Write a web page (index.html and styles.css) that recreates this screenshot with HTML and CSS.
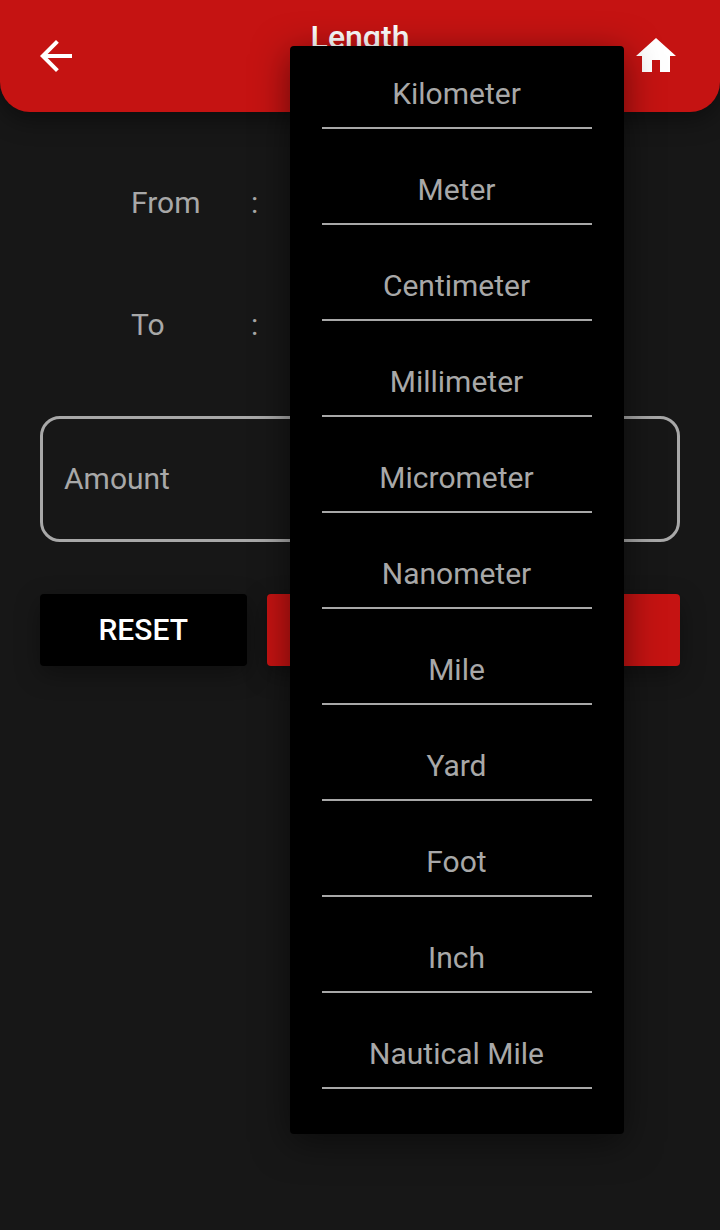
FILE: index.html
```html
<!DOCTYPE html>
<html lang="en">
<head>
<meta charset="utf-8">
<title>Length</title>
<link rel="stylesheet" href="styles.css">
</head>
<body>
<div class="screen">
  <header class="app-bar">
    <svg class="icon" viewBox="0 0 24 24"><path d="M20 11H7.830l5.590-5.590L12 4l-8 8 8 8 1.410-1.410L7.830 13H20v-2z"/></svg>
    <h1 class="title">Length</h1>
    <svg class="icon" viewBox="0 0 24 24"><path d="M10 20v-6h4v6h5v-8h3L12 3 2 12h3v8z"/></svg>
  </header>
  <main class="content">
    <div class="row"><span class="label">From</span><span>:</span></div>
    <div class="row"><span class="label">To</span><span>:</span></div>
    <div class="amount">Amount</div>
    <div class="actions">
      <button class="btn reset">RESET</button>
      <button class="btn convert" aria-label="Convert"></button>
    </div>
  </main>
  <ul class="menu">
    <li class="item">Kilometer</li>
    <li class="item">Meter</li>
    <li class="item">Centimeter</li>
    <li class="item">Millimeter</li>
    <li class="item">Micrometer</li>
    <li class="item">Nanometer</li>
    <li class="item">Mile</li>
    <li class="item">Yard</li>
    <li class="item">Foot</li>
    <li class="item">Inch</li>
    <li class="item">Nautical Mile</li>
  </ul>
</div>
</body>
</html>
```
FILE: styles.css
```css
* { box-sizing: border-box; }
body { margin: 0; background: #171717; font-family: Roboto, sans-serif; }
.screen { position: relative; height: 1230px; overflow: hidden; color: #a8a8a8; font-size: 30px; line-height: 36px; }
.app-bar {
  display: grid; grid-template-columns: 48px 1fr 48px; align-items: start;
  height: 112px; padding: 32px 40px 32px 32px; background: #c51312;
  border-radius: 0 0 30px 30px; box-shadow: 0 8px 24px rgba(0, 0, 0, .4);
}
.icon { width: 48px; height: 48px; fill: #fff; }
.title { margin: -14px 0 0 8px; font-size: 32px; line-height: 38px; font-weight: 500; text-align: center; color: #fff; }
.content { padding: 73px 40px 0; }
.row { display: flex; height: 122px; padding-left: 91px; }
.label { width: 120px; }
.amount {
  display: flex; align-items: center; height: 126px; margin-top: -13px;
  padding-left: 21px; border: 3px solid #a8a8a8; border-radius: 20px;
}
.actions { display: flex; gap: 20px; margin-top: 52px; }
.btn {
  height: 72px; padding: 0; border: 0; border-radius: 4px; color: #fff;
  font: 500 30px/36px Roboto, sans-serif; box-shadow: 0 8px 24px rgba(0, 0, 0, .35);
}
.reset { flex: 1; padding-right: 1px; background: #000; }
.convert { flex: 2; background: #c51312; }
.menu {
  position: absolute; left: 290px; top: 46px; width: 334px; height: 1088px;
  margin: 0; padding: 16px 32px; list-style: none; background: #000;
  border-radius: 4px; box-shadow: 0 8px 36px rgba(0, 0, 0, .5);
}
.item {
  height: 67px; margin-bottom: 29px; padding: 14px 1px 0 0;
  border-bottom: 2px solid #a8a8a8; text-align: center;
}
```
